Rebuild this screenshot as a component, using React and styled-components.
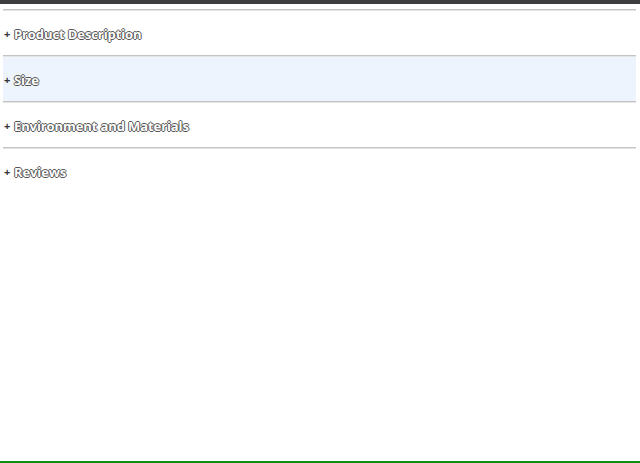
import React, { useState } from 'react';
import styled, { createGlobalStyle } from 'styled-components';

const GlobalStyle = createGlobalStyle`
  html, body {
    margin: 0;
    padding: 0;
    background: #fff;
  }
  body {
    font-family: "Open Sans", "Liberation Sans", sans-serif;
  }
`;

const Frame = styled.div`
  box-sizing: border-box;
  height: 463px;
  border-top: 4px solid #3d3d3f;
  border-bottom: 2px solid #0f8f0f;
  padding: 5px 4px 0 3px;
`;

const Accordion = styled.div`
  display: flex;
  flex-direction: column;
`;

const Item = styled.div`
  border-top: 1px solid #c4c4c4;
  box-shadow: inset 0 1px 0 #e4e4e4;
  background: ${({ active }) => (active ? '#eef4fd' : '#fff')};
`;

const Header = styled.button`
  display: flex;
  align-items: center;
  gap: 4px;
  width: 100%;
  height: 45px;
  padding: 2px 1px 0;
  border: none;
  background: transparent;
  cursor: pointer;
  font-family: "Open Sans", "Liberation Sans", sans-serif;
  font-size: 13px;
  font-weight: 700;
  letter-spacing: -0.1px;
  color: #fff;
  text-align: left;
  text-shadow:
    -1px 0 0 #555, 1px 0 0 #555, 0 -1px 0 #555, 0 1px 0 #555;
`;

const Plus = styled.span`
  font-size: 11px;
  width: 6px;
  color: #333;
  text-shadow: none;
`;

const sections = ['Product Description', 'Size', 'Environment and Materials', 'Reviews'];

const App = () => {
  const [hovered] = useState('Size');

  return (
    <>
      <GlobalStyle />
      <Frame>
        <Accordion>
          {sections.map((title) => (
            <Item key={title} active={hovered === title}>
              <Header>
                <Plus>+</Plus>
                {title}
              </Header>
            </Item>
          ))}
        </Accordion>
      </Frame>
    </>
  );
};

export default App;
